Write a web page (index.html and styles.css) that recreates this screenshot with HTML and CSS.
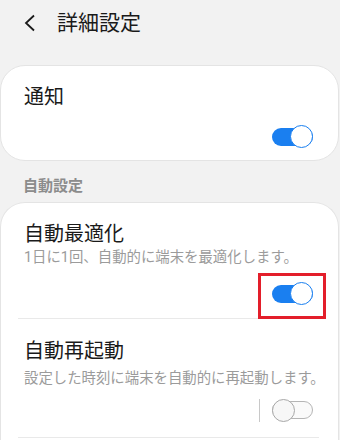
FILE: index.html
```html
<!DOCTYPE html>
<html lang="ja">
<head>
<meta charset="utf-8">
<link rel="stylesheet" href="styles.css">
</head>
<body>
<div class="header">
  <svg class="back" width="12" height="18" viewBox="0 0 12 18"><polyline points="10,1.5 2,9 10,16.5" fill="none" stroke="#1a1a1a" stroke-width="1.8"/></svg>
  <span class="title">詳細設定</span>
</div>

<div class="card card-single">
  <div class="item-title">通知</div>
  <div class="toggle-row t1">
    <span class="toggle on"><span class="track"></span><span class="thumb"></span></span>
  </div>
</div>

<div class="section">自動設定</div>

<div class="card card-open">
  <div class="item i1">
    <div class="item-title">自動最適化</div>
    <div class="item-sub">1日に1回、自動的に端末を最適化します。</div>
    <div class="toggle-row r1">
      <span class="toggle on"><span class="track"></span><span class="thumb"></span><span class="highlight"></span></span>
    </div>
  </div>
  <div class="divider"></div>
  <div class="item i2">
    <div class="item-title">自動再起動</div>
    <div class="item-sub s2">設定した時刻に端末を自動的に再起動します。</div>
    <div class="toggle-row r2">
      <span class="vline"></span>
      <span class="toggle off"><span class="track"></span><span class="thumb"></span></span>
    </div>
  </div>
  <div class="divider"></div>
</div>
</body>
</html>
```

FILE: styles.css
```css
html, body {
  margin: 0;
  padding: 0;
  background: #f2f2f2;
  font-family: "Roboto", "Noto Sans CJK JP", sans-serif;
  overflow: hidden;
}
.header {
  height: 46px;
  display: flex;
  align-items: center;
  padding-left: 24px;
}
.back { display: block; }
.title {
  margin-left: 21px;
  font-size: 21px;
  color: #1a1a1a;
  line-height: 28px;
}
.card {
  background: #fff;
  border: 1px solid #e4e4e4;
  margin: 0 1px 0 0;
  box-sizing: border-box;
}
.card-single {
  margin-top: 19px;
  border-radius: 25px;
  padding: 17.5px 25px 12px 23px;
}
.item-title {
  font-size: 20px;
  line-height: 26px;
  color: #1a1a1a;
}
.item-sub {
  font-size: 14.4px;
  line-height: 22px;
  color: #9b9b9b;
  white-space: nowrap;
}
.toggle-row {
  display: flex;
  justify-content: flex-end;
  align-items: center;
}
.t1 { margin-top: 15.5px; }
.section {
  margin-top: 14.5px;
  padding-left: 23px;
  font-size: 15px;
  line-height: 20px;
  font-weight: bold;
  color: #8c8c8c;
  height: 20px;
  margin-bottom: 6.5px;
}
.card-open {
  border-radius: 25px 25px 0 0;
  border-bottom: none;
  height: 238px;
  overflow: hidden;
}
.item { padding: 0 25px 0 23px; }
.i1 { padding-top: 18px; padding-bottom: 12.5px; }
.r1 { margin-top: 13px; }
.i2 { padding-top: 19.5px; padding-bottom: 15px; }
.s2 { margin-top: 4px; }
.r2 { margin-top: 8.5px; }
.divider {
  height: 1px;
  background: #e9e9e9;
  margin: 0 19px 0 17px;
}
.toggle {
  position: relative;
  display: block;
  width: 41px;
  height: 23px;
}
.toggle .track {
  position: absolute;
  left: 0;
  right: 0;
  top: 2.5px;
  height: 18px;
  border-radius: 9px;
  box-sizing: border-box;
}
.toggle .thumb {
  position: absolute;
  top: 0;
  width: 23px;
  height: 23px;
  border-radius: 50%;
  box-sizing: border-box;
}
.on .track { background: #1a7ff0; }
.on .thumb {
  right: 0;
  background: #fff;
  border: 1.5px solid #1a7ff0;
}
.off .track {
  border: 1.3px solid #b5b5b5;
  background: #fafafa;
}
.off .thumb {
  left: 0;
  background: #f7f7f7;
  border: 1.3px solid #a8a8a8;
}
.vline {
  width: 1px;
  height: 23px;
  background: #c8c8c8;
  margin-right: 12px;
}
.highlight {
  position: absolute;
  left: -14px;
  top: -9px;
  width: 68px;
  height: 46px;
  border: 3px solid #e31e2a;
  box-sizing: border-box;
}
```
